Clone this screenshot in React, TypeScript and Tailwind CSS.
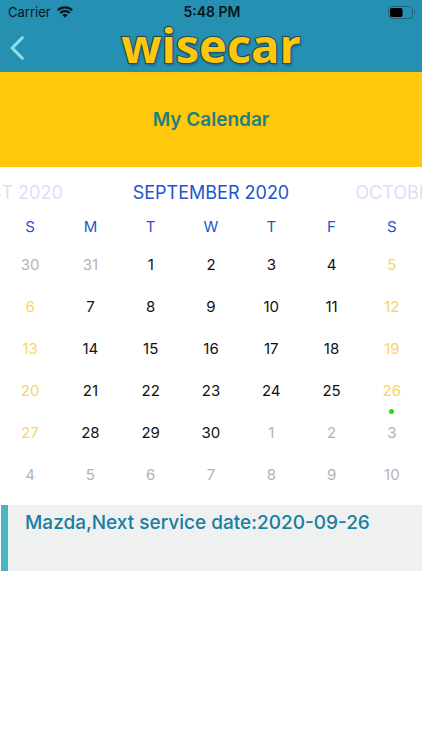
type DayKind = 'outside' | 'weekday' | 'weekend';

interface Day {
  date: number;
  kind: DayKind;
  marked: boolean;
}

const WEEKDAYS = [
  { short: 'S', name: 'Sunday' },
  { short: 'M', name: 'Monday' },
  { short: 'T', name: 'Tuesday' },
  { short: 'W', name: 'Wednesday' },
  { short: 'T', name: 'Thursday' },
  { short: 'F', name: 'Friday' },
  { short: 'S', name: 'Saturday' },
];

const DAY_COLORS: Record<DayKind, string> = {
  outside: 'text-[#b3b3b3]',
  weekday: 'text-[#111111]',
  weekend: 'text-[#fcd462]',
};

// Six weeks starting on Sunday 30 August 2020.
const WEEKS: Day[][] = Array.from({ length: 6 }, (_, week) =>
  Array.from({ length: 7 }, (_, column) => {
    const offset = week * 7 + column - 1;
    const inMonth = offset >= 1 && offset <= 30;
    const date = offset < 1 ? offset + 31 : offset > 30 ? offset - 30 : offset;
    const kind: DayKind = !inMonth ? 'outside' : column === 0 || column === 6 ? 'weekend' : 'weekday';
    return { date, kind, marked: inMonth && date === 26 };
  }),
);

function WifiIcon() {
  return (
    <svg viewBox="0 0 16 12" className="h-3 w-4" fill="none" stroke="#06161c" strokeWidth="2.3" aria-hidden="true">
      <path d="M0.8 4.3C4.8 0.4 11.2 0.4 15.2 4.3" />
      <path d="M3.2 7C5.9 4.4 10.1 4.4 12.8 7" />
      <path d="M5.4 9.1C6.9 7.7 9.1 7.7 10.6 9.1L8 11.7Z" fill="#06161c" stroke="none" />
    </svg>
  );
}

function BatteryIcon() {
  return (
    <svg viewBox="0 0 28 13" className="h-[13px] w-7" aria-hidden="true">
      <rect x="0.5" y="0.5" width="24" height="12" rx="3.2" fill="none" stroke="#1b6681" />
      <rect x="2" y="2" width="12.5" height="9" rx="1.8" fill="#000" />
      <path d="M26 4.5C27.6 5 27.6 8 26 8.5Z" fill="#1b6681" />
    </svg>
  );
}

function Header() {
  return (
    <header className="bg-[#2690b3]">
      <div className="grid h-6 grid-cols-[1fr_auto_1fr] items-center pr-1.5 pl-2 text-[#06161c]">
        <div className="flex items-center gap-1.5">
          <span className="text-[13px] leading-6">Carrier</span>
          <WifiIcon />
        </div>
        <span className="text-[14px] leading-6 font-semibold">5:48 PM</span>
        <div className="flex justify-end">
          <BatteryIcon />
        </div>
      </div>
      <div className="grid h-12 grid-cols-[1fr_auto_1fr] items-center">
        <button type="button" aria-label="Back" className="w-8 pl-2.5">
          <svg viewBox="0 0 14 24" className="h-6 w-3.5" fill="none" stroke="#90dfe9" strokeWidth="3" aria-hidden="true">
            <path d="M12.3 1.7L2.2 12L12.3 22.3" strokeLinecap="round" />
          </svg>
        </button>
        <span className="pb-1.5 font-['Open_Sans',sans-serif] text-[47px] leading-[42px] font-bold text-[#fdc80c] [paint-order:stroke_fill] [-webkit-text-stroke:2px_#24434a] [text-shadow:1px_2px_3px_#1b5a6e]">
          wisecar
        </span>
      </div>
    </header>
  );
}

function Calendar() {
  return (
    <section aria-label="Calendar">
      <div className="grid h-[50px] grid-cols-[1fr_auto_1fr] items-center gap-[66px] overflow-hidden text-[18px] whitespace-nowrap">
        <button type="button" className="flex min-w-0 justify-end pr-1 text-[#dae0f6]">
          AUGUST 2020
        </button>
        <h2 className="text-[#2453ce]">SEPTEMBER 2020</h2>
        <button type="button" className="flex min-w-0 justify-start text-[#dae0f6]">
          OCTOBER 2020
        </button>
      </div>
      <table className="w-full table-fixed text-center text-[15px]">
        <thead>
          <tr className="h-[27px] align-top leading-5 text-[#2453ce]">
            {WEEKDAYS.map((day) => (
              <th key={day.name} scope="col" abbr={day.name} className="p-0 font-normal">
                {day.short}
              </th>
            ))}
          </tr>
        </thead>
        <tbody>
          {WEEKS.map((week, index) => (
            <tr key={index} className="h-[42px]">
              {week.map((day) => (
                <td key={day.date} className="p-0">
                  <button type="button" className={`relative h-[42px] w-full ${DAY_COLORS[day.kind]}`}>
                    {day.date}
                    {day.marked && (
                      <span className="absolute inset-x-0 -bottom-0.5 mx-auto size-[5px] rounded-full bg-[#08e908]" />
                    )}
                  </button>
                </td>
              ))}
            </tr>
          ))}
        </tbody>
      </table>
    </section>
  );
}

export default function App() {
  return (
    <div className="min-h-screen bg-white font-['Inter','Liberation_Sans',sans-serif]">
      <Header />
      <main>
        <div className="flex h-[95px] items-center justify-center bg-[#ffc80b] pt-0.5">
          <h1 className="text-[19px] font-semibold text-[#20807f]">My Calendar</h1>
        </div>
        <Calendar />
        <article className="mt-[9px] ml-px h-[66px] border-l-[7px] border-[#4ab5c0] bg-[#eff1f1] pt-1.5 pl-[17px]">
          <p className="text-[19px] leading-6 font-medium text-[#187ea2]">Mazda,Next service date:2020-09-26</p>
        </article>
      </main>
    </div>
  );
}
